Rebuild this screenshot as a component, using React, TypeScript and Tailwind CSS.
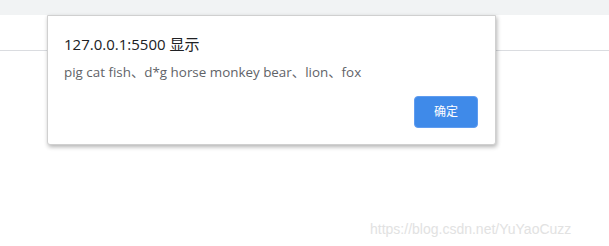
export default function App() {
  return (
    <div className="relative w-[609px] h-[246px] bg-white overflow-hidden" style={{ fontFamily: '"Open Sans", "Noto Sans CJK SC", sans-serif' }}>
      <div className="h-[15px] bg-[#f1f3f4]" />
      <div className="h-[36px] border-b border-[#dadce0]" />
      <div className="absolute left-[47px] top-[15px] w-[449px] h-[130px] bg-white border border-[#d0d0d0] rounded-b-[3px] shadow-[1px_2px_4px_rgba(0,0,0,0.3)] flex flex-col px-[16px]">
        <div className="mt-[17px] text-[15px] leading-[22px] text-[#202124]">127.0.0.1:5500 显示</div>
        <div className="mt-[8px] text-[13.4px] leading-[18px] text-[#5f6368]">pig cat fish、d*g horse monkey bear、lion、fox</div>
        <div className="flex justify-end mt-[15px] pr-[1px]">
          <button className="w-[64px] h-[32px] rounded-[4px] bg-[#3f8ae9] border border-[#5f9cf0] text-white text-[12px]">确定</button>
        </div>
      </div>
      <div className="absolute left-[370px] top-[219px] text-[14px] text-[#e2e2e2]" style={{ fontFamily: '"Liberation Sans", sans-serif' }}>https://blog.csdn.net/YuYaoCuzz</div>
    </div>
  );
}
